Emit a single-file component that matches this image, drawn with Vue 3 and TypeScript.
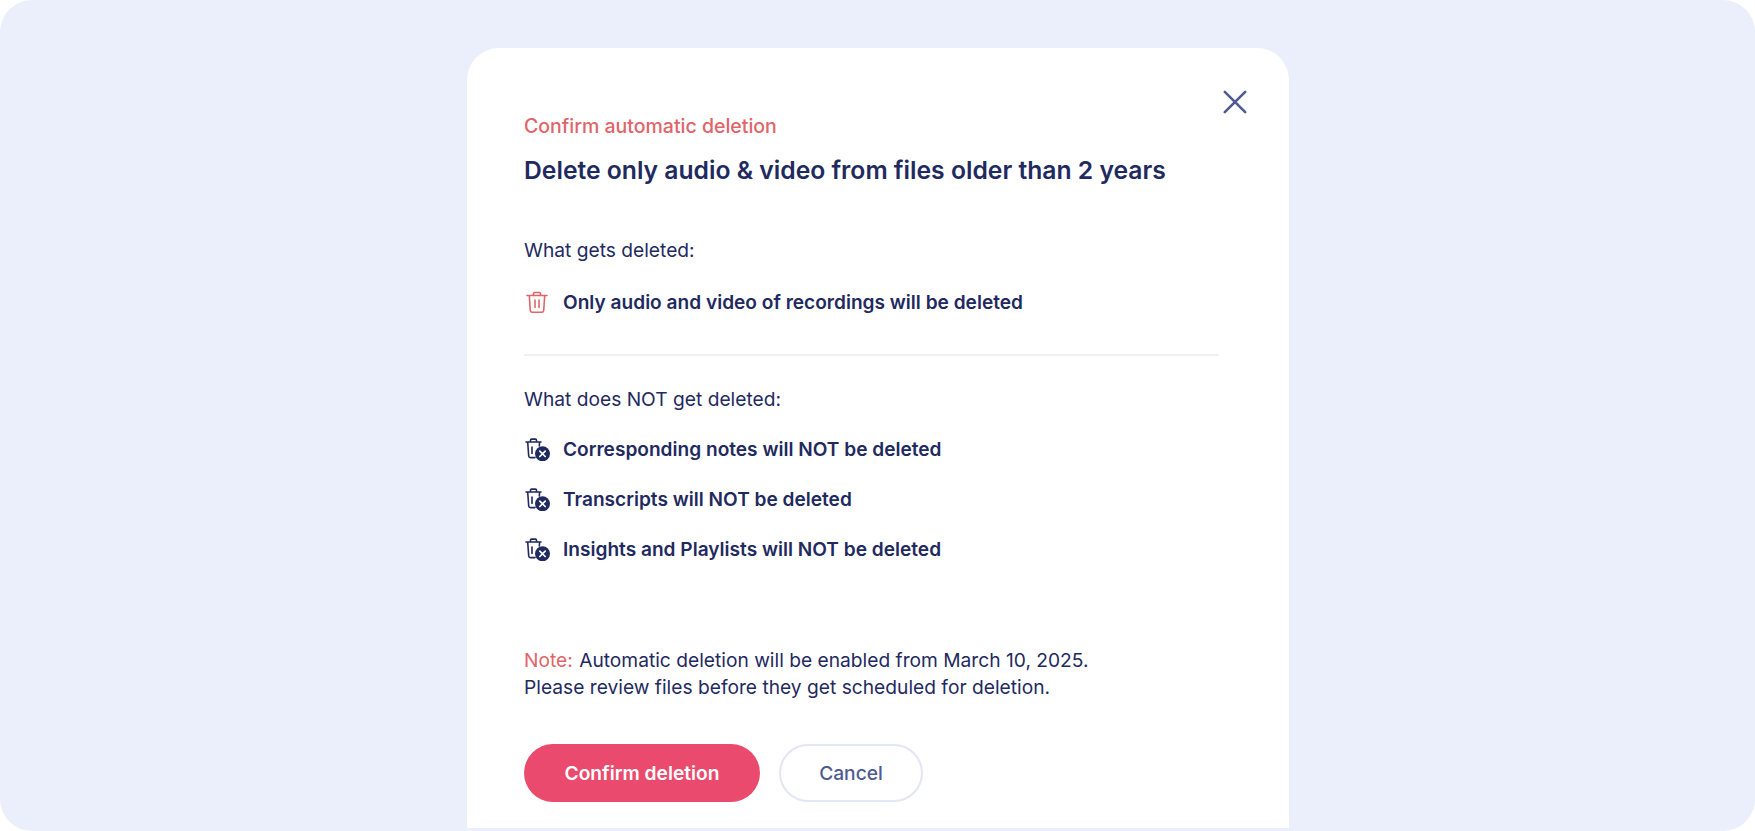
<script setup lang="ts">
const kept = [
  'Corresponding notes will NOT be deleted',
  'Transcripts will NOT be deleted',
  'Insights and Playlists will NOT be deleted',
]
</script>

<template>
  <div class="page">
    <div class="modal">
      <button type="button" class="close" aria-label="Close">
        <svg width="26" height="26" viewBox="0 0 26 26" fill="none" stroke="#4f5a92" stroke-width="2.6" stroke-linecap="round">
          <path d="M2.800 2.800 23.200 23.200M23.200 2.800 2.800 23.200" />
        </svg>
      </button>

      <p class="eyebrow">Confirm automatic deletion</p>
      <h2>Delete only audio &amp; video from files older than 2 years</h2>

      <p class="label first">What gets deleted:</p>
      <div class="row">
        <svg class="icon" width="24" height="24" viewBox="0 0 24 24" fill="none" stroke="#e0656a" stroke-width="1.6" stroke-linecap="round" stroke-linejoin="round">
          <path d="M2 5.500h20M8.500 5.300V3.800c0-.8.500-1.300 1.300-1.300h4.400c.8 0 1.300.5 1.300 1.300v1.500M4.300 5.500l1 15c.1 1.100.8 1.800 1.900 1.800h9.600c1.100 0 1.800-.7 1.900-1.800l1-15M10 10v7.500M14 10v7.500" />
        </svg>
        <span>Only audio and video of recordings will be deleted</span>
      </div>

      <div class="divider"></div>

      <p class="label">What does NOT get deleted:</p>
      <div v-for="item in kept" :key="item" class="row kept">
        <svg class="icon" width="26" height="24" viewBox="0 0 26 24" fill="none" stroke="#1f2a5f" stroke-width="1.6" stroke-linecap="round" stroke-linejoin="round">
          <path d="M1 5h15M5.500 4.800V3.200c0-.7.400-1.100 1.100-1.100h3.800c.7 0 1.100.4 1.100 1.100v1.600M2.700 5l1 14c.1 1 .8 1.600 1.800 1.600h4.500M14.600 5l-.3 4M7 10v6.500" />
          <circle cx="17.500" cy="16.800" r="7.500" fill="#1f2a5f" stroke="none" />
          <path d="M14.800 14.100l5.400 5.400M20.200 14.100l-5.400 5.400" stroke="#fff" stroke-width="1.700" />
        </svg>
        <span>{{ item }}</span>
      </div>

      <p class="note">
        <span class="note-tag">Note:</span> Automatic deletion will be enabled from March 10, 2025.<br>
        Please review files before they get scheduled for deletion.
      </p>

      <div class="actions">
        <button type="button" class="confirm">Confirm deletion</button>
        <button type="button" class="cancel">Cancel</button>
      </div>
    </div>
  </div>
</template>

<style>
html,
body {
  margin: 0;
  background: #fff;
}
</style>

<style scoped>
.page {
  box-sizing: border-box;
  width: 1755px;
  height: 831px;
  padding: 48px 0 3px 467px;
  overflow: hidden;
  background: #ebeffc;
  border-radius: 32px;
  font-family: Inter, "Liberation Sans", sans-serif;
  color: #1f2a5f;
}

.modal {
  position: relative;
  box-sizing: border-box;
  width: 822px;
  height: 780px;
  padding: 66px 70px 0 57px;
  background: #fff;
  border-radius: 32px 32px 0 0;
}

.close {
  position: absolute;
  top: 41px;
  right: 41px;
  display: flex;
  padding: 0;
  background: none;
  border: 0;
}

p {
  margin: 0;
}

.eyebrow {
  font-size: 19.5px;
  line-height: 24px;
  font-weight: 500;
  color: #e0656a;
}

h2 {
  margin: 16px 0 0;
  font-size: 24.7px;
  line-height: 32px;
  font-weight: 600;
}

.label {
  font-size: 19.200px;
  line-height: 24px;
}

.label.first {
  margin-top: 52px;
}

.row {
  display: flex;
  align-items: center;
  gap: 14px;
  margin-top: 26px;
  font-size: 19.100px;
  line-height: 28px;
  font-weight: 600;
}

.row.kept {
  gap: 12px;
}

.row.kept + .row.kept {
  margin-top: 22px;
}

.label + .row.kept {
  margin-top: 24px;
}

.icon {
  flex: none;
  margin-left: 1px;
}

.divider {
  height: 2px;
  margin-top: 38px;
  margin-bottom: 31px;
  background: #eef0f6;
}

.note {
  margin-top: 84px;
  font-size: 19.200px;
  line-height: 27px;
}

.note-tag {
  color: #e0656a;
  margin-right: 1px;
}

.actions {
  display: flex;
  gap: 19px;
  margin-top: 43px;
}

.actions button {
  height: 58px;
  font-family: inherit;
  font-size: 19.200px;
  border-radius: 29px;
}

.confirm {
  width: 236px;
  font-weight: 600;
  color: #fff;
  background: #ea4a6d;
  border: 0;
}

.cancel {
  width: 144px;
  font-weight: 500;
  color: #4f5a92;
  background: #fff;
  border: 2px solid #e3e6f3;
}
</style>
